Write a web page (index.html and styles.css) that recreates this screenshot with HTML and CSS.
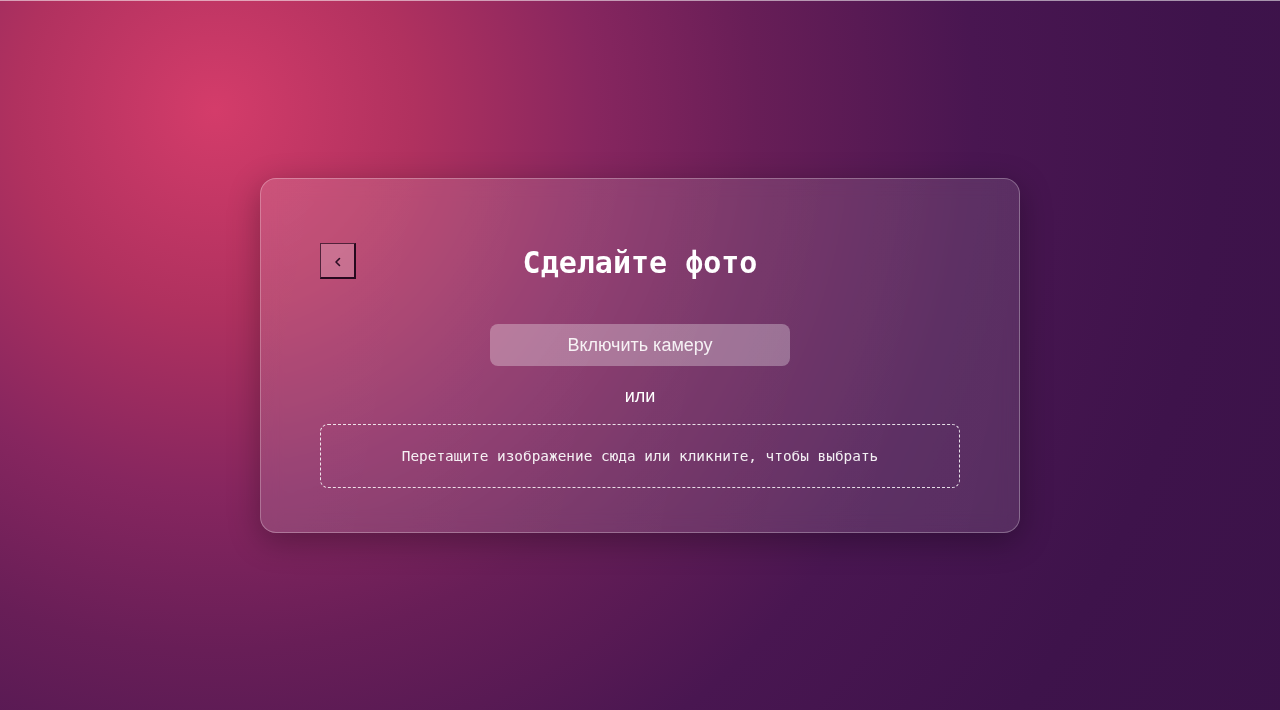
FILE: index.html
```html
<!DOCTYPE html>
<html lang="ru">
<head>
<meta charset="utf-8">
<title>Сделайте фото</title>
<link rel="stylesheet" href="styles.css">
</head>
<body>
  <main class="card">
    <div class="header">
      <button class="back" aria-label="Назад">
        <svg width="12" height="12" viewBox="0 0 12 12"><polyline points="7.5,2.5 4,6 7.5,9.5" fill="none" stroke="#2a0e24" stroke-width="1.6" stroke-linecap="round" stroke-linejoin="round"/></svg>
      </button>
      <h1 class="title">Сделайте фото</h1>
      <span class="spacer"></span>
    </div>
    <button class="camera">Включить камеру</button>
    <div class="or">или</div>
    <div class="dropzone">Перетащите изображение сюда или кликните, чтобы выбрать</div>
  </main>
</body>
</html>
```

FILE: styles.css
```css
html, body {
  margin: 0;
  height: 100%;
}
body {
  min-height: 100vh;
  display: flex;
  align-items: center;
  justify-content: center;
  background: radial-gradient(circle at 215px 110px, #d43c6a 0px, #b0315f 200px, #87265f 380px, #681e57 540px, #491651 760px, #3e134b 1000px, #3a1248 1300px);
  box-shadow: inset 0 1px 0 rgba(255, 255, 255, 0.55);
  font-family: "Liberation Sans", Arial, sans-serif;
}
.card {
  box-sizing: border-box;
  width: 760px;
  height: 355px;
  padding: 63px 59px 44px;
  border: 1px solid rgba(255, 255, 255, 0.28);
  border-radius: 16px;
  background: linear-gradient(100deg, rgba(255, 255, 255, 0.14), rgba(255, 255, 255, 0.11));
  backdrop-filter: blur(10px);
  box-shadow: 0 8px 32px rgba(0, 0, 0, 0.3);
  display: flex;
  flex-direction: column;
  align-items: center;
}
.header {
  width: 640px;
  height: 36px;
  display: grid;
  grid-template-columns: 36px 1fr 36px;
  align-items: center;
}
.back {
  box-sizing: border-box;
  width: 36px;
  height: 36px;
  padding: 0;
  display: flex;
  align-items: center;
  justify-content: center;
  background: rgba(255, 255, 255, 0.2);
  border-style: solid;
  border-width: 1px 2px 2px 1px;
  border-color: rgba(40, 10, 30, 0.75) rgba(30, 5, 25, 0.95) rgba(30, 5, 25, 0.95) rgba(40, 10, 30, 0.75);
  cursor: pointer;
}
.back svg {
  margin-top: 2px;
}
.title {
  margin: 3px 0 0;
  text-align: center;
  font-family: "DejaVu Sans Mono", monospace;
  font-weight: bold;
  font-size: 30px;
  line-height: 36px;
  color: #fff;
}
.camera {
  margin-top: 46px;
  width: 300px;
  height: 42px;
  border: none;
  border-radius: 8px;
  background: rgba(255, 255, 255, 0.3);
  color: rgba(255, 255, 255, 0.9);
  font-family: "Liberation Sans", Arial, sans-serif;
  font-size: 18px;
  padding-top: 2px;
  cursor: pointer;
}
.or {
  margin-top: 17px;
  height: 24px;
  line-height: 26px;
  font-size: 18px;
  color: #fff;
}
.dropzone {
  box-sizing: border-box;
  margin-top: 17px;
  width: 640px;
  height: 64px;
  border: 1.5px dashed rgba(255, 255, 255, 0.85);
  border-radius: 8px;
  display: flex;
  align-items: center;
  justify-content: center;
  font-family: "DejaVu Sans Mono", monospace;
  font-size: 14.4px;
  color: rgba(255, 255, 255, 0.92);
  cursor: pointer;
}
```
